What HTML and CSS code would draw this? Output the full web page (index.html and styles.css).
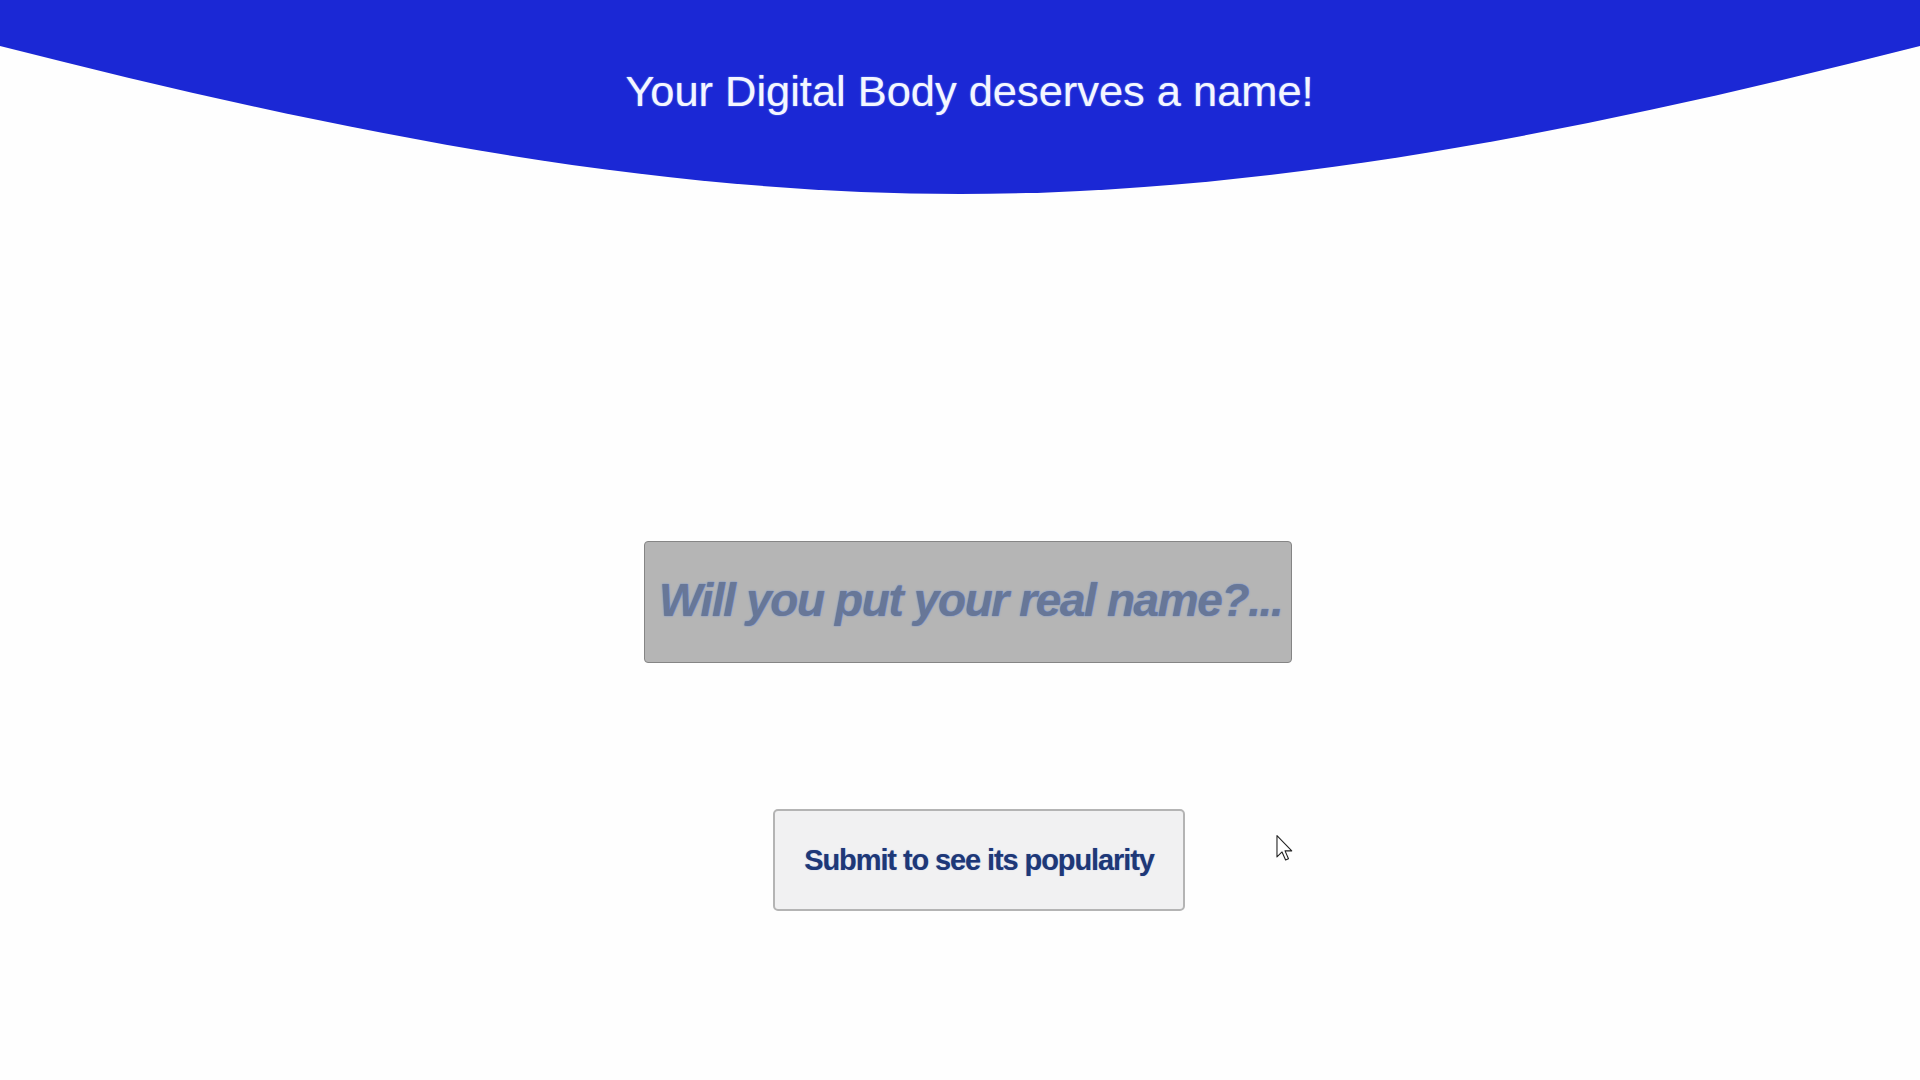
FILE: index.html
```html
<!DOCTYPE html>
<html lang="en">
<head>
<meta charset="utf-8">
<title>Your Digital Body deserves a name!</title>
<link rel="stylesheet" href="styles.css">
</head>
<body>
<header class="hero">
  <svg class="hero-wave" viewBox="0 0 1920 194" preserveAspectRatio="none" aria-hidden="true">
    <path d="M0,0 H1920 V46 C1600,127.5 1280,194 960,194 C640,194 320,127.5 0,46 Z" fill="#1b28d5"/>
  </svg>
  <h1 class="hero-title">Your Digital Body deserves a name!</h1>
</header>
<main class="form-area">
  <input class="name-input" type="text" placeholder="Will you put your real name?...">
  <button class="submit-btn" type="button">Submit to see its popularity</button>
</main>
<svg class="cursor" width="17" height="26" viewBox="0 0 12 19" aria-hidden="true">
  <path d="M0.5,0.5 L0.5,16 L4.2,12.4 L6.8,18.3 L8.9,17.4 L6.4,11.6 L11.3,11.6 Z" fill="#ffffff" stroke="#222" stroke-width="0.8" stroke-linejoin="round"/>
</svg>
</body>
</html>
```
FILE: styles.css
```css
html, body {
  margin: 0;
  padding: 0;
}

body {
  background: #fefefe;
  font-family: "Liberation Sans", Arial, sans-serif;
  min-height: 1080px;
  position: relative;
  overflow: hidden;
}

.hero {
  position: relative;
  height: 194px;
}

.hero-wave {
  position: absolute;
  left: 0;
  top: 0;
  width: 100%;
  height: 100%;
  display: block;
}

.hero-title {
  position: relative;
  margin: 0;
  padding: 67px 0 0 19px;
  font-size: 43.4px;
  font-weight: normal;
  line-height: normal;
  text-align: center;
  color: #f4f6ff;
  text-shadow: 0 0 1.5px rgba(150, 185, 255, 0.9);
}

.form-area {
  display: flex;
  flex-direction: column;
  align-items: center;
  padding-left: 16px;
  margin-top: 347px;
}

.name-input {
  box-sizing: border-box;
  width: 648px;
  height: 122px;
  margin: 0;
  padding: 0 6px 5px 14px;
  background: #b5b5b5;
  border: 1.5px solid #858585;
  border-radius: 4px;
  font-family: "Liberation Sans", Arial, sans-serif;
  font-size: 46px;
  font-weight: bold;
  font-style: italic;
  letter-spacing: -1.4px;
  color: #5f6f93;
  outline: none;
}

.name-input::placeholder {
  color: #687797;
  opacity: 1;
  text-shadow: 0 0 1.5px #4a7be0;
}

.submit-btn {
  box-sizing: border-box;
  width: 412px;
  height: 102px;
  margin: 146px 0 0 22px;
  padding: 0;
  background: #f1f1f2;
  border: 2px solid #b4b4b4;
  border-radius: 5px;
  font-family: "Liberation Sans", Arial, sans-serif;
  font-size: 29px;
  font-weight: bold;
  letter-spacing: -1.1px;
  color: #1e3877;
  text-shadow: 0 0 1px rgba(60, 100, 200, 0.5);
  cursor: pointer;
}

.cursor {
  position: absolute;
  left: 1276px;
  top: 835px;
}
```
